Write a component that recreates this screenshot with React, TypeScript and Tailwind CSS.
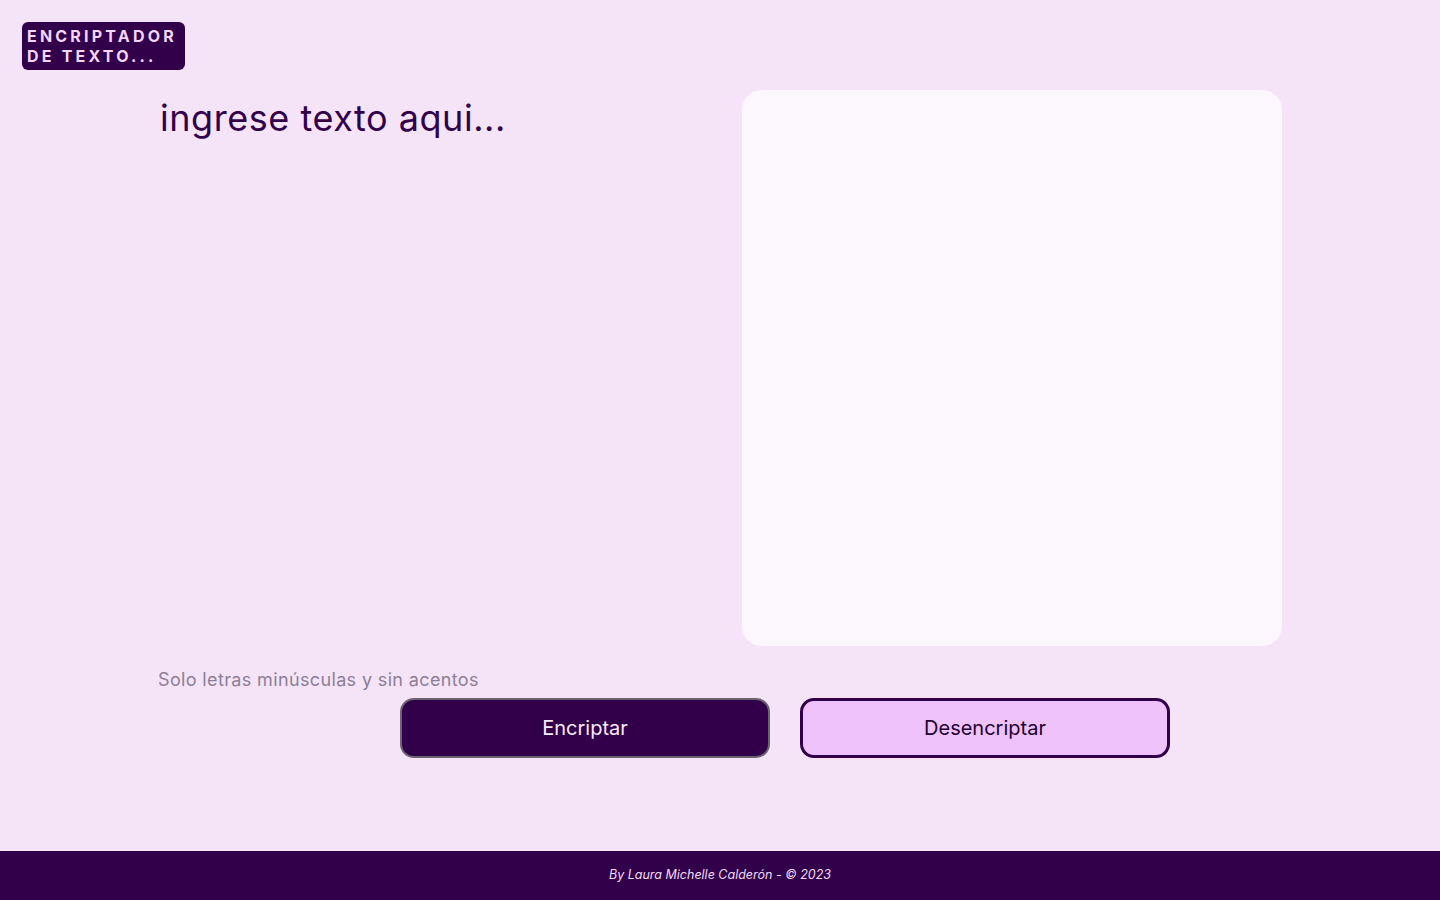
export default function App() {
  return (
    <div className="min-h-screen flex flex-col bg-[#f5e4f8]" style={{ fontFamily: "Inter, 'Noto Sans', sans-serif" }}>
      <header className="pt-[22px] pl-[22px]">
        <div className="inline-flex flex-col w-[163px] h-[48px] justify-center rounded-[6px] bg-[#32004a] pl-[5px] text-[16px] font-bold leading-[20px] tracking-[0.2em] text-[#f3d6fa]">
          <span>ENCRIPTADOR</span>
          <span>DE TEXTO...</span>
        </div>
      </header>

      <main className="flex-1 pt-[20px]">
        <div className="flex gap-[42px] pl-[160px]">
          <textarea
            className="w-[540px] h-[556px] resize-none bg-transparent text-[36px] leading-[56px] tracking-[0.015em] text-[#32004a] placeholder:text-[#32004a] outline-none"
            placeholder="ingrese texto aqui..."
          />
          <div className="w-[540px] h-[556px] rounded-[20px] bg-[#fbf7fd]" />
        </div>
        <p className="pl-[158px] mt-[22px] text-[18px] leading-[24px] tracking-[0.02em] text-[#8c7f95]">
          Solo letras minúsculas y sin acentos
        </p>
        <div className="flex gap-[30px] pl-[400px] mt-[6px]">
          <button className="w-[370px] h-[60px] rounded-[14px] border-2 border-[#6b6470] bg-[#32004a] text-[20px] text-[#f7ecfb]">
            Encriptar
          </button>
          <button className="w-[370px] h-[60px] rounded-[14px] border-[3px] border-[#32004a] bg-[#efc2fc] text-[20px] text-[#22002f]">
            Desencriptar
          </button>
        </div>
      </main>

      <footer className="h-[49px] flex items-center justify-center bg-[#32004a] text-[12.5px] italic text-[#f1dcf7]">
        By Laura Michelle Calderón - © 2023
      </footer>
    </div>
  );
}
